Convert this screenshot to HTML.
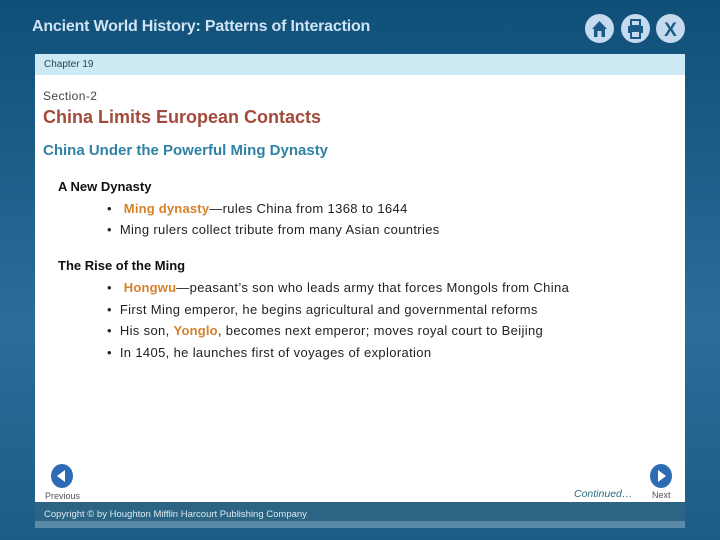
<!DOCTYPE html>
<html><head><meta charset="utf-8"><style>
body{margin:0;width:720px;height:540px;overflow:hidden;background:linear-gradient(#0f4f78,#2a6d99 60%,#1d5c86);font-family:"Liberation Sans",sans-serif;position:relative}
.abs{position:absolute;white-space:nowrap}
.hdr{left:32px;top:18px;color:#cfe3f3;font-size:16px;font-weight:bold;letter-spacing:-0.2px}
.ic{top:14px;width:29px;height:29px;border-radius:50%;background:#c5d9ef}
.panel{left:35px;top:54px;width:650px;height:474px;background:#fff}
.chap{left:35px;top:54px;width:650px;height:21px;background:#cdeaf4;font-size:10px;color:#23445a}
.foot{left:35px;top:502px;width:650px;height:24px;background:#2c6584;color:#dce8f0;font-size:9.5px}
.strip{left:35px;top:521px;width:650px;height:7px;background:#5a8aa8}
.li{font-size:13px;letter-spacing:0.35px;color:#222}
.o{color:#d5812a;font-weight:bold;letter-spacing:0.2px}
.nav{width:22px;height:24px;border-radius:50%;background:#2d6cb5;top:464px}
</style></head><body>
<div class="abs hdr">Ancient World History: Patterns of Interaction</div>
<div class="abs ic" style="left:585px"><svg width="29" height="29"><path d="M7 15 L14.5 7 L22 15 L20 15 L20 23 L9 23 L9 15Z" fill="#1a5a86"/><rect x="12.5" y="17" width="4" height="6" fill="#c5d9ef"/></svg></div>
<div class="abs ic" style="left:621px"><svg width="29" height="29"><rect x="10" y="6" width="9" height="6" fill="none" stroke="#1a5a86" stroke-width="2"/><rect x="7" y="12" width="15" height="7" fill="#1a5a86"/><rect x="10" y="17" width="9" height="7" fill="#c5d9ef" stroke="#1a5a86" stroke-width="2"/></svg></div>
<div class="abs ic" style="left:656px"><svg width="29" height="29"><text x="14.5" y="22" text-anchor="middle" font-family="Liberation Sans" font-weight="bold" font-size="19" fill="#1a5a86">X</text></svg></div>
<div class="abs panel"></div>
<div class="abs chap"><span style="position:absolute;left:9px;top:5px">Chapter 19</span></div>
<div class="abs" style="left:43px;top:89px;font-size:12px;letter-spacing:0.4px;color:#444">Section-2</div>
<div class="abs" style="left:43px;top:107px;font-size:18px;font-weight:bold;color:#a24b3c">China Limits European Contacts</div>
<div class="abs" style="left:43px;top:142px;font-size:15px;font-weight:bold;color:#2f82a5">China Under the Powerful Ming Dynasty</div>
<div class="abs" style="left:58px;top:179px;font-size:13px;font-weight:bold;color:#111">A New Dynasty</div>
<div class="abs li" style="left:107px;top:201px">•&nbsp;&nbsp; <span class="o">Ming dynasty</span>—rules China from 1368 to 1644</div>
<div class="abs li" style="left:107px;top:222px">•&nbsp; Ming rulers collect tribute from many Asian countries</div>
<div class="abs" style="left:58px;top:258px;font-size:13px;font-weight:bold;color:#111">The Rise of the Ming</div>
<div class="abs li" style="left:107px;top:280px">•&nbsp;&nbsp; <span class="o">Hongwu</span>—peasant’s son who leads army that forces Mongols from China</div>
<div class="abs li" style="left:107px;top:302px">•&nbsp; First Ming emperor, he begins agricultural and governmental reforms</div>
<div class="abs li" style="left:107px;top:323px">•&nbsp; His son, <span class="o">Yonglo</span>, becomes next emperor; moves royal court to Beijing</div>
<div class="abs li" style="left:107px;top:345px">•&nbsp; In 1405, he launches first of voyages of exploration</div>
<div class="abs nav" style="left:51px"><svg width="22" height="24"><path d="M14 6 L6 12 L14 18Z" fill="#fff"/></svg></div>
<div class="abs nav" style="left:650px"><svg width="22" height="24"><path d="M8 6 L16 12 L8 18Z" fill="#fff"/></svg></div>
<div class="abs" style="left:45px;top:491px;font-size:9px;color:#555">Previous</div>
<div class="abs" style="left:652px;top:490px;font-size:9px;color:#555">Next</div>
<div class="abs" style="left:574px;top:488px;font-size:10.5px;font-style:italic;color:#2a6a85">Continued…</div>
<div class="abs foot"><span style="position:absolute;left:9px;top:7px">Copyright © by Houghton Mifflin Harcourt Publishing Company</span></div>
<div class="abs strip"></div>
</body></html>
